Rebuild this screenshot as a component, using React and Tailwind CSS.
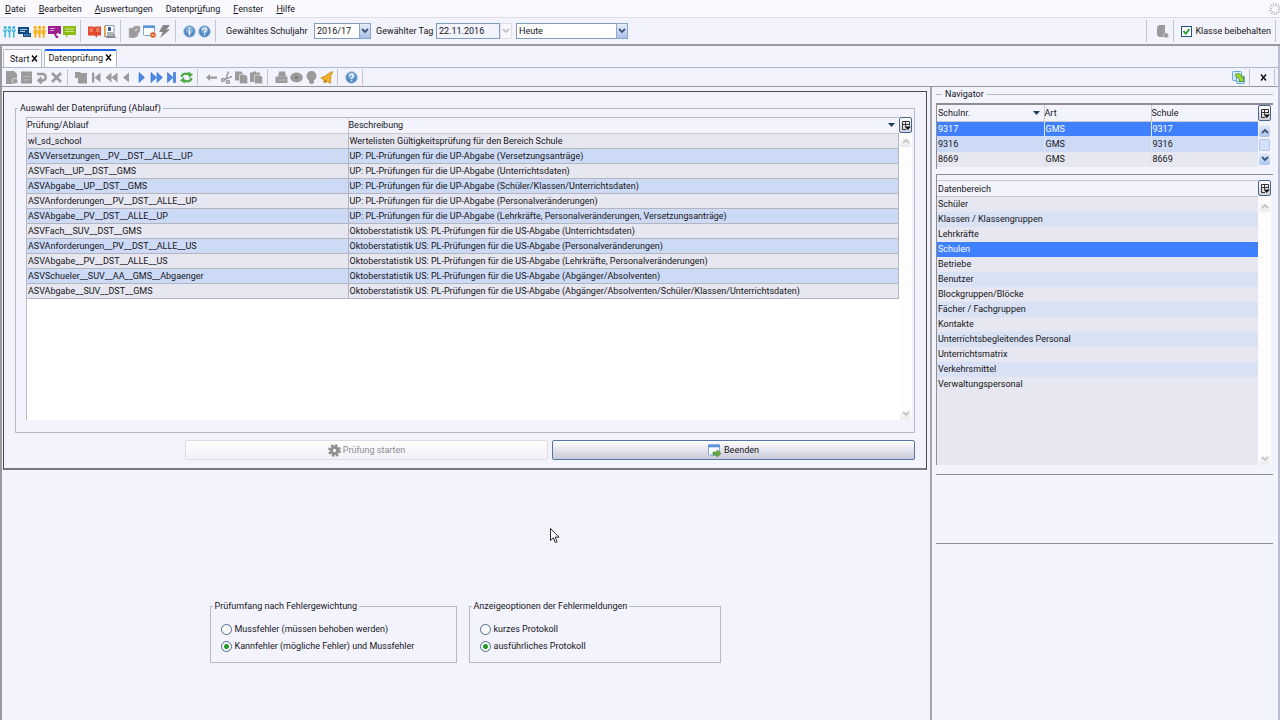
const checks = [
  ['wl_sd_school', 'Wertelisten Gültigkeitsprüfung für den Bereich Schule'],
  ['ASVVersetzungen__PV__DST__ALLE__UP', 'UP: PL-Prüfungen für die UP-Abgabe (Versetzungsanträge)'],
  ['ASVFach__UP__DST__GMS', 'UP: PL-Prüfungen für die UP-Abgabe (Unterrichtsdaten)'],
  ['ASVAbgabe__UP__DST__GMS', 'UP: PL-Prüfungen für die UP-Abgabe (Schüler/Klassen/Unterrichtsdaten)'],
  ['ASVAnforderungen__PV__DST__ALLE__UP', 'UP: PL-Prüfungen für die UP-Abgabe (Personalveränderungen)'],
  ['ASVAbgabe__PV__DST__ALLE__UP', 'UP: PL-Prüfungen für die UP-Abgabe (Lehrkräfte, Personalveränderungen, Versetzungsanträge)'],
  ['ASVFach__SUV__DST__GMS', 'Oktoberstatistik US: PL-Prüfungen für die US-Abgabe (Unterrichtsdaten)'],
  ['ASVAnforderungen__PV__DST__ALLE__US', 'Oktoberstatistik US: PL-Prüfungen für die US-Abgabe (Personalveränderungen)'],
  ['ASVAbgabe__PV__DST__ALLE__US', 'Oktoberstatistik US: PL-Prüfungen für die US-Abgabe (Lehrkräfte, Personalveränderungen)'],
  ['ASVSchueler__SUV__AA__GMS__Abgaenger', 'Oktoberstatistik US: PL-Prüfungen für die US-Abgabe (Abgänger/Absolventen)'],
  ['ASVAbgabe__SUV__DST__GMS', 'Oktoberstatistik US: PL-Prüfungen für die US-Abgabe (Abgänger/Absolventen/Schüler/Klassen/Unterrichtsdaten)'],
];

const schools = ['9317', '9316', '8669'];

const areas = [
  'Schüler', 'Klassen / Klassengruppen', 'Lehrkräfte', 'Schulen', 'Betriebe', 'Benutzer', 'Blockgruppen/Blöcke',
  'Fächer / Fachgruppen', 'Kontakte', 'Unterrichtsbegleitendes Personal', 'Unterrichtsmatrix', 'Verkehrsmittel',
  'Verwaltungspersonal',
];

// [before, access key, after]
const menus = [
  ['', 'D', 'atei'],
  ['', 'B', 'earbeiten'],
  ['', 'A', 'uswertungen'],
  ['Datenpr', 'ü', 'fung'],
  ['', 'F', 'enster'],
  ['', 'H', 'ilfe'],
];

const GREY = '#9b9b9b';

function People({ color }) {
  return (
    <g fill="none" stroke={color} strokeWidth="1.5">
      <path d="M.6 4.500l1.600 3 1.600-3M4.900 4.500l1.600 3 1.600-3M9.200 4.500l1.600 3 1.600-3M2.200 7v5.500M6.500 7v5.500M10.800 7v5.500" />
      <g fill={color} stroke="none">
        <circle cx="2.2" cy="2.500" r="1.500" />
        <circle cx="6.5" cy="2.500" r="1.500" />
        <circle cx="10.8" cy="2.500" r="1.500" />
      </g>
    </g>
  );
}

function Disc({ children }) {
  return (
    <g>
      <circle cx="6.5" cy="6.5" r="5.8" fill="#4f86c0" stroke="#a9c3e0" />
      <circle cx="6.5" cy="5" r="3.6" fill="#82aedb" />
      {children}
    </g>
  );
}

const glyphs = {
  students: <People color="#35b5dc" />,
  classes: (
    <g>
      <path fill="#0f4c86" d="M0 2h11v7H0zM5 8h8v4H5z" />
      <path stroke="#e8f0fa" strokeWidth=".8" d="M2 4.5h7M2 6.5h5M6 10h1.500M8.500 10H10M11 10h1" />
    </g>
  ),
  teachers: (
    <g fill="#f6b21b">
      <circle cx="2.300" cy="2.400" r="1.600" />
      <circle cx="6.500" cy="2.400" r="1.600" />
      <circle cx="10.700" cy="2.400" r="1.600" />
      <path d="M.5 4.500h3.600v4.300h-.8v4H1.300v-4H.5zM4.700 4.500h3.600v4.300h-.8v4h-2v-4h-.8zM8.900 4.500h3.600v4.300h-.8v4h-2v-4h-.8z" />
    </g>
  ),
  board: (
    <g>
      <path fill="#9b1f8c" d="M0 1h13v8H0zM6 9h5l-1 4H8z" />
      <path stroke="#e6b8e0" strokeWidth=".9" d="M2 3.500h5M2 5.500h4" />
      <circle cx="10" cy="9.500" r="1.600" fill="#f3f3fe" />
    </g>
  ),
  speech: (
    <g>
      <path fill="#8dbb12" d="M0 1h13v9H5l-2 3v-3H0z" />
      <path stroke="#d6eb9a" strokeWidth=".9" d="M2 4h9M2 6.500h9" />
    </g>
  ),
  book: (
    <g>
      <path fill="#e2492b" d="M0 1.500h5.500l1 .7 1-.7H13v9H9v2.300L6.500 10.500H0z" />
      <path stroke="#f8b9a8" strokeWidth=".9" d="M1.500 4h3.500M1.500 6h3.500M8 4h3.500M8 6h3.500" />
    </g>
  ),
  report: (
    <g>
      <path fill="#fff" stroke="#8b9bb5" d="M2 .5h9v11H2z" />
      <path fill="#3a5f95" d="M5 2h3v4H5z" />
      <path fill="#e59a3c" d="M1 1h1.500v11H1z" />
      <path stroke="#666" strokeWidth="1.100" d="M4 8h6M4 10h8M3 12.300h10" />
    </g>
  ),
  module: <path fill={GREY} d="M1 3h4l1-2h6v6l-2 1v3l-4 2H1zM6.500 5l1.500 1 2-2.500" stroke="#c6c6cc" strokeWidth=".6" />,
  windowClose: (
    <g>
      <rect x=".5" y="1" width="11" height="9.500" rx="1" fill="#fafcff" stroke="#7ea6d8" />
      <path fill="#5a94dd" d="M0 .5h12v2.500H0z" />
      <circle cx="10" cy="10" r="2.800" fill="#e2571c" />
      <path stroke="#fff" d="M8.500 10h3" />
    </g>
  ),
  bolt: <path fill="#858585" d="M5 0h7L8.500 4.500H12L2 13l2.800-6H1z" />,
  info: <Disc><path stroke="#fff" strokeWidth="1.600" d="M6.500 2.500v1.600M6.500 5.300v5" /></Disc>,
  help: (
    <Disc>
      <path fill="none" stroke="#fff" strokeWidth="1.300" d="M4.700 5c0-2.600 3.800-2.500 3.600-.2C8.200 6 6.600 6 6.600 7.800M6.600 8.800v1.400" />
    </Disc>
  ),
  newDoc: <g fill={GREY}><path d="M1 0h8l3 3v6H9v4H1z" /><circle cx="10" cy="10" r="2.900" stroke="#f3f3fe" strokeWidth=".7" /></g>,
  save: <g fill={GREY}><path d="M1 .5h11v12H1z" /><path stroke="#c2c2c8" strokeWidth=".8" d="M3 5.500h7M4 9h5" /></g>,
  undo: <path fill="none" stroke={GREY} strokeWidth="2.400" d="M2 3h5.500a3.200 3.200 0 010 6.500H4M6.500 6.500l-3 3 3 3" />,
  remove: <path stroke={GREY} strokeWidth="2.600" d="M2 2l9 9M11 2l-9 9" />,
  folder: <path fill={GREY} d="M0 1h5l1 1h6v10.500H3V7H0z" />,
  first: <path fill={GREY} d="M2 1.500h2.300v10H2zM10.500 1.500v10L4.500 6.500z" />,
  rewind: <path fill={GREY} d="M6.500 1.500v10L.5 6.500zM12.500 1.500v10l-6-5z" />,
  prev: <path fill={GREY} d="M9 1.500v10L3 6.500z" />,
  next: <path fill="#4b8be6" stroke="#2f6dcc" strokeWidth=".6" d="M4 1.500v10l5.500-5z" />,
  forward: <path fill="#4b8be6" stroke="#2f6dcc" strokeWidth=".6" d="M1 1.500v10l5.500-5zM7 1.500v10l5.500-5z" />,
  last: <path fill="#4b8be6" stroke="#2f6dcc" strokeWidth=".6" d="M2.500 1.500v10l5.500-5zM8.500 1.500h2v10h-2z" />,
  refresh: (
    <g fill="none" stroke="#4dab46" strokeWidth="2.200">
      <path d="M1.500 6C2 2.500 6 2 9 3.500M11.500 7c-.5 3.500-4.500 4-7.500 2.500" />
      <path fill="#4dab46" stroke="none" d="M8 .5l5 3-4 3.500zM5 12.500l-5-3 4-3.500z" />
    </g>
  ),
  back: <path fill={GREY} d="M1 6.500L5 3v2.500h7v2.200H5V10z" />,
  cut: (
    <g fill="none" stroke={GREY} strokeWidth="1.500">
      <path d="M8.500 .5L5.500 9M12 5.500L4 8.500" />
      <circle cx="3" cy="9" r="1.500" />
      <circle cx="8" cy="11" r="1.500" />
    </g>
  ),
  copy: <g fill={GREY}><path d="M0 .5h6l2 2v7H0z" /><path stroke="#f3f3fe" strokeWidth=".6" d="M4.500 3.500h5.500l2.700 2.200v7H4.500z" /></g>,
  paste: <g fill={GREY}><path d="M0 1.500h3V.5h3v1h4V11H0z" /><path stroke="#f3f3fe" strokeWidth=".6" d="M4.500 4h5.500l2.700 2.200v6.500H4.500z" /></g>,
  print: <g fill={GREY}><path d="M4 .5h6l1 5H3z" /><path d="M.5 5.500h12V12H.5z" /><path stroke="#c6c6cc" strokeWidth=".8" d="M3 9h7.500" /></g>,
  eye: <g fill={GREY}><ellipse cx="6.500" cy="6.500" rx="6.300" ry="5" /><circle cx="6.500" cy="6.500" r="1.800" fill="#7e7e7e" /></g>,
  bulb: <g fill={GREY}><circle cx="6.500" cy="5" r="5" /><path d="M4 9h5v2.500l-1.500 1.500h-2L4 11.500z" /></g>,
  bell: (
    <g>
      <path fill="#f0b02c" stroke="#bb7a10" strokeWidth=".6" d="M12 .5l.5 1.500-1.500 2-.5 8.500L.8 7 5 5l5-3.500z" />
      <circle cx="5" cy="10.300" r="1.600" fill="#c98214" />
    </g>
  ),
  database: <g fill={GREY}><path d="M1 2l2-2h6v9l-1 3H3L1 10z" /><circle cx="10" cy="10.300" r="2.600" stroke="#f3f3fe" strokeWidth=".5" /></g>,
  sync: (
    <g>
      <rect x=".5" y=".5" width="9" height="9" rx="1" fill="#d5ebfa" stroke="#6da7d3" />
      <rect x="4.500" y="5" width="8" height="7.500" rx="1" fill="#c7e2f7" stroke="#6da7d3" />
      <path fill="#a4d72a" stroke="#3d8f2c" strokeWidth=".8" d="M3 4c2-2.200 4.500-1.500 6 0l1 2.500 1.500-1v5H6.500l1.500-1.200C7 8 6.500 6 4.500 6z" />
    </g>
  ),
  exit: (
    <g>
      <rect x=".5" y="1" width="11" height="10" rx="1" fill="#fbfdff" stroke="#7ea6d8" />
      <path fill="#5a94dd" d="M0 .5h12v2.800H0z" />
      <path fill="#65ad3c" stroke="#3c7d22" strokeWidth=".6" d="M5 8h4V6l4 3.500L9 13v-2H5z" />
    </g>
  ),
  gear: (
    <g>
      <circle cx="6.500" cy="6.500" r="5.200" fill="none" stroke="#8f8f8f" strokeWidth="2.400" strokeDasharray="2.400 1.680" />
      <circle cx="6.500" cy="6.500" r="3.200" fill="none" stroke="#8f8f8f" strokeWidth="3" />
    </g>
  ),
  columns: (
    <g fill="none" stroke="#333">
      <path d="M7 10.500H3.500v-8h7v4M3.500 5.500h7M6.500 2.500v5" />
      <path fill="#111" stroke="none" d="M5.500 7.500h6.500l-3.200 3.500z" />
    </g>
  ),
};

function Icon({ name }) {
  return (
    <svg viewBox="0 0 13 13" className="block size-[13px] shrink-0" aria-hidden="true">
      {glyphs[name]}
    </svg>
  );
}

function Separator() {
  return <span className="ml-1 mr-[7px] w-px self-stretch bg-[#c3c3cb]" />;
}

function ToolGroup({ tools }) {
  return (
    <>
      <div className="flex gap-0.5">
        {tools.map(([name, label]) => (
          <button key={name} type="button" aria-label={label}>
            <Icon name={name} />
          </button>
        ))}
      </div>
      <Separator />
    </>
  );
}

function Chevron({ up, muted }) {
  return (
    <svg viewBox="0 0 8 6" className="h-1.5 w-2" aria-hidden="true">
      <path
        d={up ? 'M1 5l3-3 3 3' : 'M1 1l3 3 3-3'}
        fill="none"
        stroke={muted ? '#c4c4c8' : '#3f5578'}
        strokeWidth="1.800"
      />
    </svg>
  );
}

function Combo({ id, value, className }) {
  return (
    <div className={`relative h-4 ${className}`}>
      <select
        id={id}
        defaultValue={value}
        className="block h-full w-full appearance-none border border-[#7f9dc0] bg-white pl-0.5 leading-[13px]"
      >
        <option>{value}</option>
      </select>
      <span className="pointer-events-none absolute inset-y-0 right-0 flex w-3 items-center justify-center rounded-r-xs border border-[#8ba6cb] bg-linear-to-b from-[#e9effb] to-[#a9c0e6]">
        <Chevron />
      </span>
    </div>
  );
}

function ScrollButton({ up, muted, label }) {
  return (
    <button
      type="button"
      aria-label={label}
      className={
        muted
          ? 'flex h-3 w-[11px] items-center justify-center bg-linear-to-b from-white to-[#ececef]'
          : 'flex h-3 w-[11px] items-center justify-center rounded-xs bg-linear-to-b from-[#e4ecfb] to-[#abc3ea]'
      }
    >
      <Chevron up={up} muted={muted} />
    </button>
  );
}

function ColumnButton() {
  return (
    <button
      type="button"
      aria-label="Spalten"
      className="flex h-4 w-[13px] shrink-0 items-center justify-center rounded-xs border border-[#47658f] bg-linear-to-b from-white to-[#cfcfdb]"
    >
      <Icon name="columns" />
    </button>
  );
}

function SortArrow() {
  return (
    <svg viewBox="0 0 7 4" className="mr-1 h-1 w-[7px]" aria-hidden="true">
      <path d="M0 0h7L3.500 4z" fill="#16405c" />
    </svg>
  );
}

function OptionGroup({ title, name, options, className }) {
  return (
    <fieldset className={`border border-[#b9b9c5] pb-2.5 pl-2.5 ${className}`}>
      <legend className="-ml-2 px-0.5 leading-3">{title}</legend>
      <div className="mt-[11px] flex flex-col gap-[5px]">
        {options.map((option, i) => (
          <label key={option} className="flex items-center gap-[3px] leading-3">
            <input
              type="radio"
              name={name}
              defaultChecked={i === 1}
              className="size-[11px] appearance-none rounded-full border border-[#4a6c99] bg-[#fafaf6] checked:bg-[radial-gradient(circle,#1f9a24_0_2px,transparent_3px)]"
            />
            {option}
          </label>
        ))}
      </div>
    </fieldset>
  );
}

function MenuBar() {
  return (
    <nav className="flex h-[18px] items-center justify-between border-b border-[#dedee6] bg-[#f9f9fe] pl-[5px]">
      <div className="flex gap-[13px]">
        {menus.map(([before, key, after]) => (
          <button key={key} type="button">
            {before}
            <span className="underline">{key}</span>
            {after}
          </button>
        ))}
      </div>
      <svg viewBox="0 0 12 12" className="size-3" aria-hidden="true">
        <circle cx="7" cy="6" r="4.500" fill="none" stroke="#b8b8b8" strokeWidth="3" strokeDasharray="1 1.350" />
      </svg>
    </nav>
  );
}

function MainToolbar() {
  return (
    <div className="flex h-[28px] items-center border-b-2 border-[#9a9a9e] py-0.5 pl-[3px]">
      <ToolGroup
        tools={[
          ['students', 'Schüler'],
          ['classes', 'Klassen'],
          ['teachers', 'Lehrkräfte'],
          ['board', 'Unterricht'],
          ['speech', 'Nachrichten'],
        ]}
      />
      <ToolGroup tools={[['book', 'Schulen'], ['report', 'Berichte']]} />
      <ToolGroup tools={[['module', 'Module'], ['windowClose', 'Fenster schließen'], ['bolt', 'Ausführen']]} />
      <ToolGroup tools={[['info', 'Info'], ['help', 'Hilfe']]} />
      <label htmlFor="year" className="ml-[3px] w-[81px] whitespace-nowrap">Gewähltes Schuljahr</label>
      <Combo id="year" value="2016/17" className="ml-[7px] w-[57px]" />
      <label htmlFor="day" className="ml-[5px] w-[57px] whitespace-nowrap">Gewählter Tag</label>
      <input
        id="day"
        readOnly
        value="22.11.2016"
        className="ml-[3px] h-4 w-16 border border-[#7f9dc0] bg-[#f3f3fe] pl-0.5"
      />
      <button
        type="button"
        disabled
        aria-label="Kalender"
        className="flex h-4 w-3 items-center justify-center border border-[#dedee6] bg-[#f8f8fd]"
      >
        <Chevron muted />
      </button>
      <Combo id="range" value="Heute" className="ml-1 w-28" />
      <div className="ml-auto flex items-center self-stretch">
        <Separator />
        <button type="button" aria-label="Datenbank" className="ml-0.5">
          <Icon name="database" />
        </button>
        <Separator />
        <label className="flex items-center gap-[3px] whitespace-nowrap">
          <span className="relative size-[11px]">
            <input
              type="checkbox"
              defaultChecked
              className="block size-[11px] appearance-none border border-[#24528a] bg-white"
            />
            <svg viewBox="0 0 11 11" className="pointer-events-none absolute inset-0 size-[11px]" aria-hidden="true">
              <path d="M2.500 5l2.200 2.800L8.500 3" fill="none" stroke="#22a022" strokeWidth="1.800" />
            </svg>
          </span>
          Klasse beibehalten
        </label>
        <span className="mx-1 w-px self-stretch bg-[#c3c3cb]" />
      </div>
    </div>
  );
}

function TabClose() {
  return (
    <svg viewBox="0 0 7 7" className="block size-[7px]" aria-hidden="true">
      <path d="M1 .5l5 6M6 .5l-5 6" stroke="#111" strokeWidth="1.500" />
    </svg>
  );
}

function Tabs() {
  return (
    <div className="flex h-[22px] items-end gap-0.5 border-b border-[#a9b9cf] pl-px">
      <div className="flex h-[18px] items-center rounded-t-xs border border-b-0 border-[#b3bccb] bg-[#fbfbff] pl-1.5 pr-[3px]">
        <button type="button">Start</button>
        <button type="button" aria-label="Start schließen" className="ml-0.5">
          <TabClose />
        </button>
      </div>
      <div className="flex h-[18px] items-center rounded-t-xs border border-t-2 border-b-0 border-[#b3bccb] border-t-[#2160dd] bg-white pl-[3px] pr-1 pb-[3px]">
        <button type="button">Datenprüfung</button>
        <button type="button" aria-label="Datenprüfung schließen" className="ml-0.5">
          <TabClose />
        </button>
      </div>
    </div>
  );
}

function RecordToolbar() {
  return (
    <div className="flex h-[19px] items-center border-b border-[#97979c] py-px pl-[3px]">
      <ToolGroup tools={[['newDoc', 'Neu'], ['save', 'Speichern'], ['undo', 'Rückgängig'], ['remove', 'Löschen']]} />
      <ToolGroup
        tools={[
          ['folder', 'Öffnen'],
          ['first', 'Erster'],
          ['rewind', 'Zurückspulen'],
          ['prev', 'Vorheriger'],
          ['next', 'Nächster'],
          ['forward', 'Vorspulen'],
          ['last', 'Letzter'],
          ['refresh', 'Aktualisieren'],
        ]}
      />
      <ToolGroup tools={[['back', 'Zurück'], ['cut', 'Ausschneiden'], ['copy', 'Kopieren'], ['paste', 'Einfügen']]} />
      <ToolGroup tools={[['print', 'Drucken'], ['eye', 'Vorschau'], ['bulb', 'Hinweis'], ['bell', 'Benachrichtigung']]} />
      <ToolGroup tools={[['help', 'Hilfe zur Maske']]} />
      <div className="ml-auto flex items-center self-stretch">
        <button type="button" aria-label="Navigator abgleichen">
          <Icon name="sync" />
        </button>
        <span className="ml-1 mr-2.5 w-px self-stretch bg-[#c3c3cb]" />
        <button type="button" aria-label="Navigator schließen">
          <TabClose />
        </button>
        <span className="ml-[7px] mr-[3px] w-px self-stretch bg-[#c3c3cb]" />
      </div>
    </div>
  );
}

function CheckPanel() {
  return (
    <section className="mt-1 border border-b-2 border-[#4a4a4c] border-b-[#77777a] px-[11px] pt-2.5 pb-2">
      <fieldset className="border border-[#b9b9c5] pb-3 pl-2.5 pr-0.5">
        <legend className="-ml-2 px-0.5 leading-3">Auswahl der Datenprüfung (Ablauf)</legend>
        <div className="mt-[3px] flex h-[303px]">
          <div className="flex-1 border-l border-t border-[#b9b9c1] bg-white">
            <table className="w-full table-fixed border-collapse text-left">
              <thead>
                <tr className="h-[15px] bg-[#f3f3fe]">
                  <th className="w-[321px] border-b border-r border-[#c9c9d1] p-0 font-normal">Prüfung/Ablauf</th>
                  <th className="border-b border-[#c9c9d1] p-0 font-normal">
                    <div className="flex items-center justify-between">
                      Beschreibung
                      <SortArrow />
                    </div>
                  </th>
                </tr>
              </thead>
              <tbody>
                {checks.map(([name, text]) => (
                  <tr key={name} className="h-[15px] odd:bg-[#e7e7f1] even:bg-[#ccdaf6]">
                    <td className="border-b border-r border-[#b5b5bd] p-0 pl-px">{name}</td>
                    <td className="border-b border-r border-[#b5b5bd] p-0 pl-px">{text}</td>
                  </tr>
                ))}
              </tbody>
            </table>
          </div>
          <div className="flex w-[13px] flex-col items-center bg-[#fdfdfd]">
            <ColumnButton />
            <div className="mt-0.5 flex flex-1 flex-col justify-between">
              <ScrollButton up muted label="Nach oben" />
              <ScrollButton muted label="Nach unten" />
            </div>
          </div>
        </div>
      </fieldset>
      <div className="mt-[7px] ml-[170px] flex gap-1">
        <button
          type="button"
          disabled
          className="flex h-5 flex-1 items-center justify-center gap-0.5 rounded-xs border border-[#dcdce2] bg-linear-to-b from-white to-[#f1f1f7] text-[#8b8b90]"
        >
          <Icon name="gear" />
          Prüfung starten
        </button>
        <button
          type="button"
          className="flex h-5 flex-1 items-center justify-center gap-[3px] rounded-xs border border-[#5677a3] bg-linear-to-b from-white to-[#c9c9da]"
        >
          <Icon name="exit" />
          Beenden
        </button>
      </div>
    </section>
  );
}

function Navigator() {
  return (
    <aside className="w-[348px] shrink-0 border-l-2 border-[#a6a6aa] pl-1 pr-[5px]">
      <h2 className="flex items-center gap-[3px] leading-[14px] before:h-px before:w-1.5 before:bg-[#b9b9c1] after:h-px after:flex-1 after:bg-[#b9b9c1]">
        Navigator
      </h2>
      <div className="mt-0.5 flex h-[66px] overflow-hidden border-l border-t-2 border-[#8e8e92]">
        <table className="h-[62px] flex-1 table-fixed border-collapse text-left">
          <thead>
            <tr className="h-4">
              <th className="w-1/3 border-b border-r border-[#c9c9d1] p-0 pl-px font-normal">
                <div className="flex items-center justify-between">
                  Schulnr.
                  <SortArrow />
                </div>
              </th>
              <th className="w-1/3 border-b border-r border-[#c9c9d1] p-0 font-normal">Art</th>
              <th className="w-1/3 border-b border-[#c9c9d1] p-0 font-normal">Schule</th>
            </tr>
          </thead>
          <tbody>
            {schools.map((nr, i) => (
              <tr
                key={nr}
                className={['h-[15px] bg-[#3f80ff] text-white', 'h-[15px] bg-[#ccdaf6]', 'h-[15px] bg-[#e7e7f1]'][i]}
              >
                <td className="border-r border-[#dfe3f0] p-0 pl-px">{nr}</td>
                <td className="border-r border-[#dfe3f0] p-0 pl-px">GMS</td>
                <td className="p-0 pl-px">{nr}</td>
              </tr>
            ))}
          </tbody>
        </table>
        <div className="mr-0.5 flex w-[13px] flex-col items-center">
          <ColumnButton />
          <div className="mt-1 flex flex-1 flex-col">
            <ScrollButton up label="Nach oben" />
            <span className="my-0.5 h-3 w-[11px] rounded-xs border border-[#b4c7ea] bg-[#d3e0f9]" />
            <ScrollButton label="Nach unten" />
          </div>
        </div>
      </div>
      <div className="mt-[5px] flex h-[291px] border-l border-t border-[#8e8e92] pt-[5px]">
        <table className="flex-1 border-collapse self-start border-t border-[#c9c9d1] text-left">
          <thead>
            <tr className="h-4">
              <th className="border-b border-[#c9c9d1] p-0 pl-px font-normal">Datenbereich</th>
            </tr>
          </thead>
          <tbody>
            {areas.map((area) => (
              <tr
                key={area}
                className={
                  area === 'Schulen' ? 'h-[15px] bg-[#3f80ff] text-white' : 'h-[15px] odd:bg-[#e7e7f1] even:bg-[#d9e1f4]'
                }
              >
                <td className="p-0 pl-px">{area}</td>
              </tr>
            ))}
            <tr className="h-[73px] bg-[#e7e7f1]">
              <td />
            </tr>
          </tbody>
        </table>
        <div className="mr-0.5 flex w-[13px] flex-col items-center bg-[#fdfdfd]">
          <ColumnButton />
          <div className="mt-1 flex flex-1 flex-col justify-between">
            <ScrollButton up muted label="Nach oben" />
            <ScrollButton muted label="Nach unten" />
          </div>
        </div>
      </div>
      <hr className="mt-[9px] border-t border-[#8e8e92]" />
      <hr className="mt-[68px] border-t border-[#8e8e92]" />
    </aside>
  );
}

function Pointer() {
  return (
    <svg viewBox="0 0 10 16" className="absolute top-[528px] left-[550px] h-4 w-2.5" aria-hidden="true">
      <path d="M.5.500v12l2.800-2.600L5.300 14.500l1.800-.8-2-4.500H9z" fill="#fff" stroke="#111" strokeWidth=".9" />
    </svg>
  );
}

export default function App() {
  return (
    <div className="relative flex min-h-screen flex-col bg-[#f3f3fe] font-['Roboto',sans-serif] text-[9px] leading-[14px] text-[#151518]">
      <MenuBar />
      <MainToolbar />
      <div className="flex flex-1 flex-col border-x-2 border-l-[#9a9a9e] border-r-[#b9bfd0]">
        <Tabs />
        <RecordToolbar />
        <div className="flex flex-1 gap-[3px] pl-px">
          <main className="flex-1">
            <CheckPanel />
            <div className="mt-[130px] flex justify-center gap-3">
              <OptionGroup
                title="Prüfumfang nach Fehlergewichtung"
                name="scope"
                options={['Mussfehler (müssen behoben werden)', 'Kannfehler (mögliche Fehler) und Mussfehler']}
                className="w-[247px]"
              />
              <OptionGroup
                title="Anzeigeoptionen der Fehlermeldungen"
                name="display"
                options={['kurzes Protokoll', 'ausführliches Protokoll']}
                className="w-[252px]"
              />
            </div>
          </main>
          <Navigator />
        </div>
      </div>
      <Pointer />
    </div>
  );
}
